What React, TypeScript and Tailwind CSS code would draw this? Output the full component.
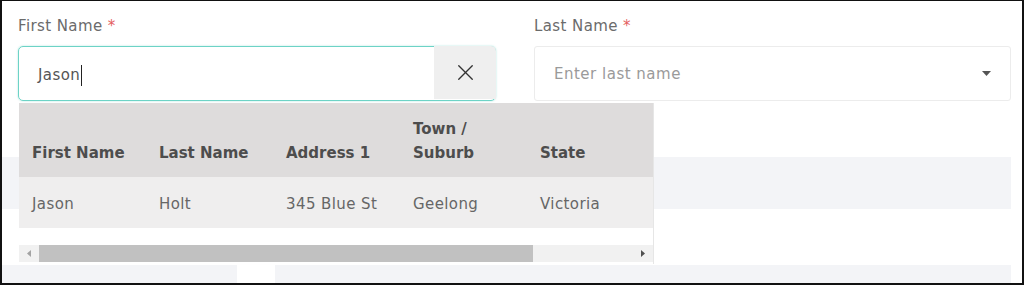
import { X } from 'lucide-react';

const columns = ['First Name', 'Last Name', 'Address 1', 'Town / Suburb', 'State'];
const rows = [['Jason', 'Holt', '345 Blue St', 'Geelong', 'Victoria']];

const Label = ({ text }: { text: string }) => (
    <div className="h-[22px] mb-[9px] text-[15px] leading-[22px] tracking-[0.4px] text-[#6b6b6b]">
        {text} <span className="text-[#e46060]">*</span>
    </div>
);

const App = () => {
    return (
        <div className="relative w-[1024px] h-[285px] overflow-hidden bg-white border-t border-l-2 border-r-2 border-b-2 border-[#111] font-['DejaVu_Sans',sans-serif]">
            <div className="pt-[14px] pl-[16px] grid grid-cols-[478px_477px] gap-x-[38px]">
                <div>
                    <Label text="First Name" />
                    <div className="flex h-[55px] border border-[#6dd3c6] rounded-[5px] shadow-[0_0_2px_rgba(109,211,198,0.6)]">
                        <div className="flex-1 flex items-center pl-[19px] pt-[3px] text-[15px] tracking-[0.4px] text-[#555]">
                            Jason
                            <span className="ml-px w-px h-[21px] bg-[#222]"></span>
                        </div>
                        <button className="w-[62px] -mt-px -mr-px mb-px bg-[#efefef] rounded-tr-[5px] flex items-center justify-center text-[#333]">
                            <X size={27} strokeWidth={1.2} />
                        </button>
                    </div>
                </div>
                <div>
                    <Label text="Last Name" />
                    <div className="flex items-center h-[55px] border border-[#ececec] rounded-[3px] pl-[19px] pr-[19px]">
                        <span className="flex-1 pt-[2px] text-[15px] tracking-[0.5px] text-[#9a9a9a]">Enter last name</span>
                        <svg width="9" height="5" viewBox="0 0 9 5">
                            <path d="M0 0 L9 0 L4.5 5 Z" fill="#555" />
                        </svg>
                    </div>
                </div>
            </div>

            {/* faded form rows behind the dropdown */}
            <div className="mt-[56px] w-[1009px] h-[52px] bg-[#f3f4f7]"></div>
            <div className="mt-[56px] flex gap-[38px]">
                <div className="w-[235px] h-[20px] bg-[#f3f4f7]"></div>
                <div className="w-[736px] h-[20px] bg-[#f3f4f7]"></div>
            </div>

            {/* suggestions dropdown */}
            <div className="absolute left-[17px] top-[102px] w-[635px] bg-white border-r border-[#e6e6e6] overflow-hidden">
                <div className="w-[762px]">
                    <div className="flex h-[74px] bg-[#dedcdc] items-end pb-[12px]">
                        {columns.map((c) => (
                            <div key={c} className="w-[127px] pl-[13px] pr-[20px] text-[15px] leading-[24px] font-bold text-[#4d4d4d]">
                                {c}
                            </div>
                        ))}
                    </div>
                    {rows.map((r, i) => (
                        <div key={i} className="flex h-[51px] items-center pt-[3px] bg-[#efeeee]">
                            {r.map((v, j) => (
                                <div key={j} className="w-[127px] pl-[13px] text-[15px] tracking-[0.4px] text-[#666]">
                                    {v}
                                </div>
                            ))}
                        </div>
                    ))}
                </div>
                <div className="h-[17px]"></div>
                <div className="flex h-[17px] bg-[#f1f1f1] items-center">
                    <div className="w-[20px] flex justify-center">
                        <svg width="4" height="7" viewBox="0 0 4 7">
                            <path d="M4 0 L4 7 L0 3.5 Z" fill="#a3a3a3" />
                        </svg>
                    </div>
                    <div className="w-[494px] h-full bg-[#c1c1c1]"></div>
                    <div className="flex-1 flex justify-end pr-[8px]">
                        <svg width="4" height="7" viewBox="0 0 4 7">
                            <path d="M0 0 L0 7 L4 3.5 Z" fill="#505050" />
                        </svg>
                    </div>
                </div>
                <div className="h-[2px]"></div>
            </div>
        </div>
    );
};

export default App;
